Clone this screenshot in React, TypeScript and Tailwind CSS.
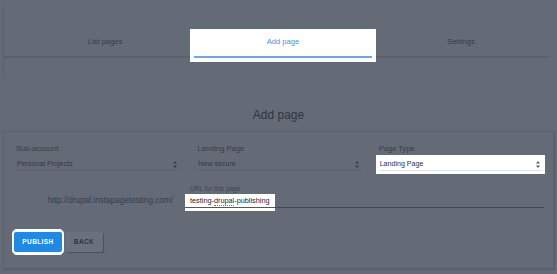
import type { ReactNode } from "react";

const tabs = ["List pages", "Add page", "Settings"];

export default function App() {
  return (
    <div className="h-[274px] w-[557px] overflow-hidden bg-[#646b77] px-[3px] pt-[3px] font-['Liberation_Sans',Arial,sans-serif]">
      <div className="h-[75px] w-[547px] border-l border-[#5a616c] pt-[30px]">
        <nav className="flex border-b-2 border-[#5b626d] pl-[12px]">
          {tabs.map((tab) => {
            const active = tab === "Add page";
            return (
              <div
                key={tab}
                className={
                  active
                    ? "relative z-10 -mb-[2px] flex h-[25px] w-[178px] items-center justify-center border-b-2 border-[#6ba8e5] bg-white pb-[5px] text-[7.6px] text-[#4a8fe0] shadow-[0_0_0_4px_#fff]"
                    : "-mb-[2px] flex h-[25px] w-[178px] items-center justify-center border-b-2 border-transparent pb-[5px] text-[7.6px] text-[#363d4a]"
                }
              >
                {tab}
              </div>
            );
          })}
        </nav>
      </div>

      <h1 className="mt-[30px] text-center text-[12px] leading-[14px] text-[#2e3542]">Add page</h1>

      <section className="mt-[9px] h-[138px] w-[551px] border border-[#5c636e] shadow-[1px_1px_1px_rgba(0,0,0,0.12)] pl-[12px] pr-[11px] pt-[12px]">
        <div className="grid grid-cols-3 gap-[18px]">
          <Field label="Sub-account">
            <SelectBox value="Personal Projects" />
          </Field>
          <Field label="Landing Page">
            <SelectBox value="New secure" />
          </Field>
          <Field label="Page Type">
            <SelectBox value="Landing Page" highlighted />
          </Field>
        </div>

        <div className="mt-[13px] flex items-end">
          <div className="w-[160px] pb-[5px] pr-[3px] text-right text-[8.2px] leading-[10px] text-[#363d4a]">
            http://drupal.instapagetesting.com/
          </div>
          <div className="ml-[9px] flex-1">
            <div className="pl-[5px] text-[6.5px] leading-[10px] text-[#3e4552]">URL for this page</div>
            <div className="flex items-start">
              <div className="h-[17px] bg-white px-[5px] pt-[2px] text-[7.3px] leading-[10px] text-[#1e2431] shadow-[inset_0_-3px_0_#fff,inset_0_-4px_0_#2a5e9e]">
                testing-<span className="border-b border-dotted border-[#e0443c]">drupal</span>-publishing
              </div>
              <div className="mr-[-2px] h-[14px] flex-1 border-b border-[#2c4d74]" />
            </div>
          </div>
        </div>

        <div className="mt-[21px] -ml-[2px] flex">
          <button
            type="button"
            className="h-[20px] w-[48px] rounded-[2px] bg-[#1f89e6] text-[6.5px] font-bold tracking-[0.4px] text-white shadow-[0_0_0_2px_#fff,0_3px_0_#fff,0_-3px_0_#fff]"
          >
            PUBLISH
          </button>
          <button
            type="button"
            className="ml-[3px] h-[20px] w-[38px] rounded-[2px] bg-[#69717e] text-[6.5px] font-bold tracking-[0.4px] text-[#2e3542] shadow-[1px_1px_1px_rgba(0,0,0,0.25)]"
          >
            BACK
          </button>
        </div>
      </section>
    </div>
  );
}

function Field({ label, children }: { label: string; children: ReactNode }) {
  return (
    <div>
      <div className="text-[7.6px] leading-[10px] text-[#363d4a]">{label}</div>
      <div className="mt-[4px]">{children}</div>
    </div>
  );
}

function SelectBox({ value, highlighted }: { value: string; highlighted?: boolean }) {
  return (
    <div
      className={
        highlighted
          ? "flex h-[13px] items-center justify-between border-b border-[#dfe3ea] bg-white pl-[1px] pr-[2px] text-[7.1px] text-[#283050] shadow-[0_0_0_3px_#fff]"
          : "flex h-[13px] items-center justify-between border-b border-[#5b626e] pl-[1px] pr-[2px] text-[7.1px] text-[#323947]"
      }
    >
      <span>{value}</span>
      <svg width="4" height="7" viewBox="0 0 4 7" aria-hidden>
        <path d="M2 0 L4 2.6 H0 Z M0 4.4 H4 L2 7 Z" fill={highlighted ? "#555b66" : "#363d49"} />
      </svg>
    </div>
  );
}
